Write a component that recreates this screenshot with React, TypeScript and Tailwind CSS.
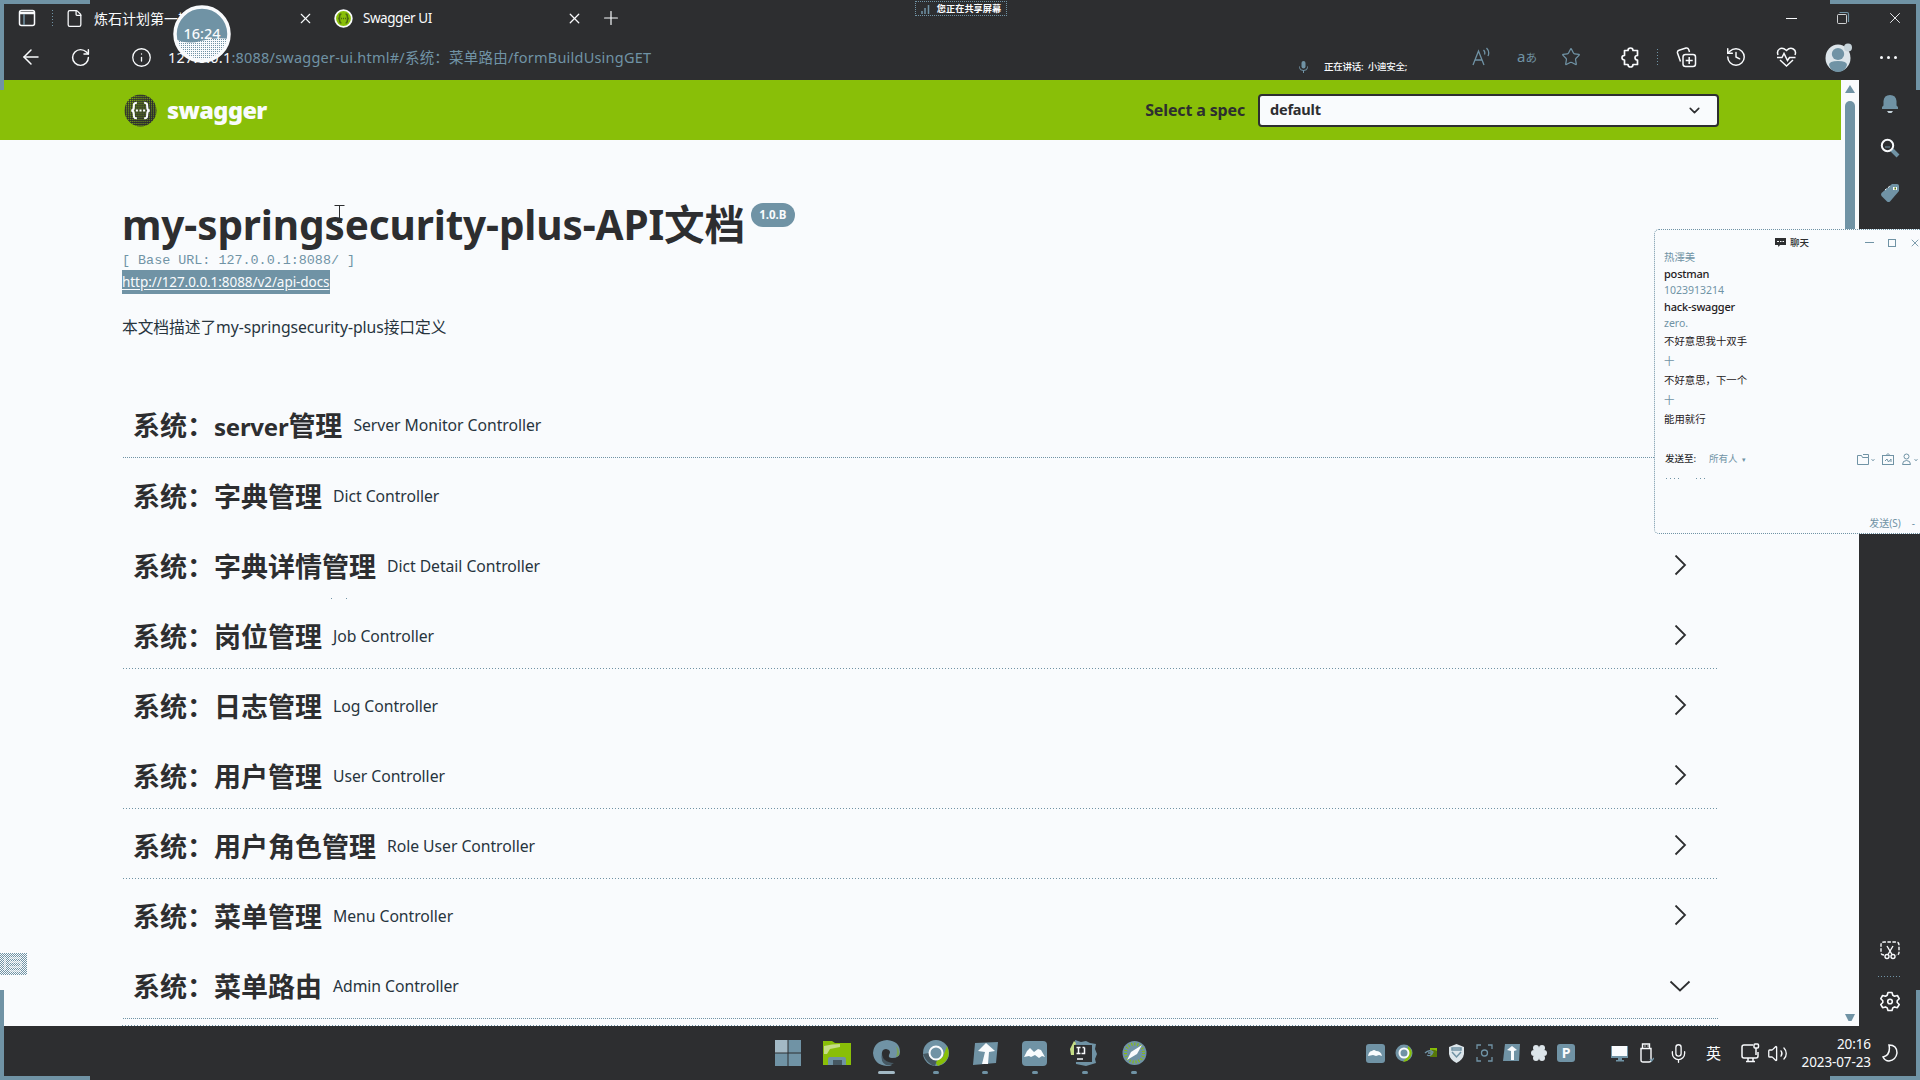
import React from "react";
import {
  ArrowLeft, File, Plus, X, RotateCw, Info, Star, History, Mic, Volume2, ChevronDown,
} from "lucide-react";

const DOTS = "bg-[repeating-linear-gradient(90deg,#7093a5_0_1px,transparent_1px_2px)]";
const SPARSE = "bg-[repeating-linear-gradient(90deg,#7093a5_0_1px,transparent_1px_3px)]";

type Group = { prefix: string; latin?: string; name: string; desc: string; line: "dense" | "sparse" | "none" | "few"; open?: boolean };

const groups: Group[] = [
  { prefix: "系统：", latin: "server", name: "管理", desc: "Server Monitor Controller", line: "dense" },
  { prefix: "系统：", name: "字典管理", desc: "Dict Controller", line: "none" },
  { prefix: "系统：", name: "字典详情管理", desc: "Dict Detail Controller", line: "few" },
  { prefix: "系统：", name: "岗位管理", desc: "Job Controller", line: "sparse" },
  { prefix: "系统：", name: "日志管理", desc: "Log Controller", line: "none" },
  { prefix: "系统：", name: "用户管理", desc: "User Controller", line: "sparse" },
  { prefix: "系统：", name: "用户角色管理", desc: "Role User Controller", line: "sparse" },
  { prefix: "系统：", name: "菜单管理", desc: "Menu Controller", line: "none" },
  { prefix: "系统：", name: "菜单路由", desc: "Admin Controller", line: "dense", open: true },
];

function SwaggerMark({ size, ring }: { size: number; ring: boolean }) {
  return (
    <svg width={size} height={size} viewBox="0 0 32 32" className="shrink-0">
      <defs>
        <pattern id="mesh" width="2" height="2" patternUnits="userSpaceOnUse">
          <rect width="2" height="2" fill="#2d2e30" />
          <rect width="1" height="1" fill="#89bf08" />
        </pattern>
      </defs>
      <circle cx="16" cy="16" r={ring ? 14 : 15.5} fill={ring ? "#89bf08" : "url(#mesh)"} stroke={ring ? "#f9fbfd" : "none"} strokeWidth="3" />
      <g fill="none" stroke={ring ? "#4d6a12" : "#f9fbfd"} strokeWidth={ring ? 2.6 : 2}>
        <path d="M12.5 8.5c-3 0-3 1.500-3 4s-.5 3.500-2.500 3.500c2 0 2.500 1 2.500 3.500s0 4 3 4" />
        <path d="M19.500 8.500c3 0 3 1.500 3 4s.5 3.500 2.500 3.500c-2 0-2.500 1-2.500 3.500s0 4-3 4" />
        <path d="M11.500 16h2m1.500 0h2m1.500 0h2" />
      </g>
    </svg>
  );
}

function WindowBar() {
  return (
    <div className="flex h-[34px] items-center pt-0.5 pl-[18px] pr-[16px] text-[#f9fbfd]">
      <svg width="18" height="18" viewBox="0 0 18 18" fill="none" stroke="currentColor" strokeWidth="1.5">
        <rect x="1.500" y="1.500" width="15" height="15" rx="2" />
        <path d="M1.500 4h15" strokeWidth="2.500" />
        <path d="M6 5v11" stroke="#7093a5" />
      </svg>
      <div className="ml-4 h-4 w-px bg-[repeating-linear-gradient(180deg,#7093a5_0_1px,transparent_1px_3px)]" />
      <File className="ml-3" size={19} strokeWidth={1.600} />
      <div className="ml-[10px] w-[191px] whitespace-nowrap text-[14px]">炼石计划第一期</div>
      <X className="ml-3" size={17} strokeWidth={1.600} />
      <div className="ml-5 flex"><SwaggerMark size={19} ring /></div>
      <div className="ml-[10px] w-[191px] text-[13.500px] tracking-[-0.45px]">Swagger UI</div>
      <X className="ml-3" size={17} strokeWidth={1.800} />
      <Plus className="ml-[17px]" size={22} strokeWidth={1.300} />
      <div className="ml-auto flex items-center">
        <div className="h-px w-[11px] bg-[#f9fbfd]" />
        <svg className="ml-[39px] text-[#7093a5]" width="14" height="14" viewBox="0 0 14 14" fill="none" stroke="currentColor">
          <rect x="1.500" y="3.500" width="9" height="9" rx="1" stroke="#f9fbfd" strokeWidth="0.800" />
          <path d="M3.500 1.500h7.500q1.500 0 1.500 1.500v8" strokeWidth="1.200" />
        </svg>
        <X className="ml-[36px]" size={18} strokeWidth={1.200} />
      </div>
    </div>
  );
}

function AddressBar() {
  return (
    <div className="flex h-[46px] items-center pl-[19px] pr-[23px] text-[#f9fbfd]">
      <ArrowLeft size={24} strokeWidth={1.500} />
      <RotateCw className="ml-[27px]" size={21} strokeWidth={1.700} />
      <Info className="ml-[40px]" size={21} strokeWidth={1.500} />
      <div className="ml-4 pt-px whitespace-nowrap text-[14.500px] tracking-[0.22px] text-[#7093a5]">
        <span className="text-[#f9fbfd]">127.0.0.1</span>:8088/swagger-ui.html#/系统：菜单路由/formBuildUsingGET
      </div>
      <div className="ml-auto mt-[20px] flex w-[173px] items-center whitespace-nowrap font-medium">
        <svg width="9" height="12" viewBox="0 0 9 12" fill="#7093a5">
          <rect x="2.500" width="4" height="7.500" rx="2" />
          <path d="M.5 5.500v1q0 3 4 3t4-3v-1M4.500 9v3" fill="none" stroke="#7093a5" />
        </svg>
        <span className="ml-4 text-[9.500px] tracking-[-0.25px]">正在讲话: &nbsp;小迪安全;</span>
      </div>
      <svg width="18" height="20" viewBox="0 0 18 20" fill="none" stroke="#7093a5" strokeWidth="1.300">
        <path d="M1 18 6.500 4 12 18M3 13h7M11.500 3q2 2 1 4.500M14.500 1q3.500 3.500 1.500 8" />
      </svg>
      <div className="ml-[27px] w-5 whitespace-nowrap text-[15px] leading-5 text-[#7093a5]">a<span className="text-[11.500px]">あ</span></div>
      <Star className="ml-[24px] text-[#7093a5]" size={20} strokeWidth={1.500} />
      <svg className="ml-[39px]" width="21" height="21" viewBox="0 0 21 21" fill="none" stroke="currentColor" strokeWidth="1.700" strokeLinejoin="round">
        <path d="M4.500 3.500H8Q8 1 10.500 1T13 3.500h4.500v5q-2.500 0-2.500 2.200t2.500 2.300V17.500H13q0 2.500-2.500 2.500T8 17.500H4.500V13Q2 13 2 10.700T4.500 8.500z" />
      </svg>
      <div className="ml-4 h-4 w-px bg-[repeating-linear-gradient(180deg,#7093a5_0_1px,transparent_1px_3px)]" />
      <svg className="ml-[18px]" width="21" height="21" viewBox="0 0 21 21" fill="none" stroke="currentColor" strokeWidth="1.500">
        <rect x="7" y="7.500" width="12.500" height="12" rx="2.500" />
        <path d="M13.200 10v7M9.700 13.500h7M4.500 14.500 1.500 6q-.5-2 1.500-2.700L10 1q2-.5 2.700 1.500l.8 2.500" />
      </svg>
      <History className="ml-[28px]" size={22} strokeWidth={1.600} />
      <svg className="ml-[29px]" width="21" height="20" viewBox="0 0 21 20" fill="none" stroke="currentColor" strokeWidth="1.500">
        <path d="M2 8Q.5 4 3.500 2t7 1.500Q14 0 17.300 2T19 8" />
        <path d="M1 10.500h5l2-4 3.500 7 2-3h6M4 13l6.500 6 6.500-6" />
      </svg>
      <svg className="ml-[28px]" width="28" height="32" viewBox="0 0 28 32">
        <ellipse cx="13" cy="17" rx="12.500" ry="13.500" fill="#dce5ea" />
        <circle cx="23" cy="6.500" r="4" fill="#c6d3da" />
        <ellipse cx="13" cy="13" rx="6.200" ry="6" fill="#7093a5" />
        <path d="M4 24q0-4 9-4t9 4q-2 7-9 7t-9-7" fill="#7093a5" />
      </svg>
      <div className="ml-[27px] flex gap-[4px]">
        <i className="size-[3px] rounded-full bg-[#f9fbfd]" /><i className="size-[3px] rounded-full bg-[#f9fbfd]" /><i className="size-[3px] rounded-full bg-[#f9fbfd]" />
      </div>
    </div>
  );
}

function GroupRow({ g }: { g: Group }) {
  return (
    <div className="flex h-[70px] flex-col first:mb-px">
      <div className="flex h-[69px] items-center pl-[11px] pr-[27px] pt-[6px]">
        <h4 className="flex items-baseline text-[27px] leading-none font-bold whitespace-nowrap">
          {g.prefix}
          {g.latin && <span className="text-[24px] tracking-[-0.25px]">{g.latin}</span>}
          {g.name}
        </h4>
        <span className="ml-[11px] text-[15.750px] tracking-[-0.05px] text-[#27343d]">{g.desc}</span>
        <span className="ml-auto">
          {g.open ? (
            <svg width="24" height="20" viewBox="0 0 24 20" fill="none" stroke="#2d2e30" strokeWidth="1.800"><path d="m2.500 4.500 9.500 9 9.500-9" /></svg>
          ) : (
            <svg width="24" height="24" viewBox="0 0 24 24" fill="none" stroke="#2d2e30" strokeWidth="1.800"><path d="m7.500 .5 9.500 9.500-9.500 9.500" /></svg>
          )}
        </span>
      </div>
      {g.line === "dense" && <div className={`ml-px h-px ${DOTS}`} />}
      {g.line === "sparse" && <div className={`ml-px h-px ${SPARSE}`} />}
      {g.line === "few" && <div className="ml-[209px] flex gap-[14px]"><i className="size-px bg-[#7093a5]" /><i className="size-px bg-[#7093a5]" /></div>}
    </div>
  );
}

function Page() {
  return (
    <div className="flex w-[1841px] flex-col overflow-hidden">
      <header className="flex h-[60px] shrink-0 items-center bg-[#89bf08] pl-[124px] pr-[122px]">
        <div className="flex"><SwaggerMark size={33} ring={false} /></div>
        <span className="ml-[10px] pt-0.5 text-[23.500px] leading-none font-black tracking-[-0.6px] text-[#f9fbfd]">swagger</span>
        <span className="ml-auto text-[16px] font-bold tracking-[-0.15px]">Select a spec</span>
        <div className="ml-[13px] flex h-[33px] w-[461px] items-center justify-between rounded-[4px] border-2 border-[#2d2e30] bg-[#f9fbfd] pl-[10px] pr-[14px] text-[14.500px] font-bold tracking-[-0.2px]">
          <span>default</span>
          <ChevronDown size={17} strokeWidth={2.300} />
        </div>
      </header>
      <main className="flex flex-col pl-[122px] pr-[122px]">
        <div className="mt-[59px] flex h-[52px] items-center whitespace-nowrap">
          <h1 className="text-[40.500px] leading-none font-bold tracking-[-0.13px]">my-springsecurity-plus-API文档</h1>
          <span className="mb-[20px] ml-[6px] flex h-6 w-11 items-center justify-center rounded-full bg-[#7093a5] text-[11.500px] font-bold text-[#f9fbfd]">1.0.B</span>
        </div>
        <div className="h-[18px] whitespace-pre pt-px font-['Liberation_Mono'] text-[13.400px] leading-[18px] text-[#7093a5]">[ Base URL: 127.0.0.1:8088/ ]</div>
        <div className="flex h-6 pt-px">
          <a className="flex h-[24px] items-center bg-[#7093a5] pt-px text-[13.500px] tracking-[-0.06px] text-[#f9fbfd] underline underline-offset-2">http://127.0.0.1:8088/v2/api-docs</a>
        </div>
        <p className="mt-[22px] h-6 text-[15.750px] leading-6 tracking-[-0.07px] text-[#27343d]">本文档描述了my-springsecurity-plus接口定义</p>
        <section className="mt-[49px]">
          {groups.map((g) => <GroupRow key={g.desc} g={g} />)}
          <div className={`mt-[6px] h-px ${SPARSE}`} />
        </section>
      </main>
    </div>
  );
}

function SideRail() {
  return (
    <aside className="flex w-[61px] flex-col items-center bg-[#2d2e30] text-[#f9fbfd]">
      <svg className="mt-[14px]" width="18" height="20" viewBox="0 0 18 20" fill="#7093a5">
        <path d="M1 15V13l1.500-1.500V7Q3 1 9 1t6.500 6v4.500L17 13v2z" /><path d="M6 17h6l-1.500 2h-3z" fill="#c6d3da" />
      </svg>
      <svg className="mt-[24px]" width="20" height="20" viewBox="0 0 20 20" fill="none">
        <path d="m12 12 6 6" stroke="#7093a5" strokeWidth="4" />
        <circle cx="7.500" cy="7.500" r="5.700" stroke="#f9fbfd" strokeWidth="2" />
        <path d="M5 9h5" stroke="#7093a5" />
      </svg>
      <svg className="mt-[25px]" width="20" height="20" viewBox="0 0 20 20">
        <path d="M12 1h5q2 0 2 2v5L10 18.500q-1.500 1-3 0L1.500 13q-1-1.500 0-3z" fill="#7093a5" />
        <path d="m5 7 5-4" stroke="#f9fbfd" strokeDasharray="2 2" /><rect x="13" y="4" width="4" height="3" fill="#f9fbfd" /><rect x="14.500" y="4.500" width="1.500" height="2" fill="#577908" />
      </svg>
      <svg className="mt-auto" width="20" height="19" viewBox="0 0 20 19" fill="none" stroke="currentColor" strokeWidth="1.400">
        <path d="M4 14q-3 0-3-2.500V4q0-3 3-3h12q3 0 3 3v7.500q0 2.500-3 2.500" strokeDasharray="3.500 1.500" />
        <path d="m7 5 5 8.500M13 5l-5 8.500" /><circle cx="7" cy="15.500" r="2" /><circle cx="13" cy="15.500" r="2" />
      </svg>
      <div className="mt-4 h-px w-6 bg-[repeating-linear-gradient(90deg,#7093a5_0_1px,transparent_1px_3px)]" />
      <svg className="mt-[14px] mb-[14px]" width="20" height="21" viewBox="0 0 20 21" fill="none" stroke="currentColor" strokeWidth="1.600" strokeLinejoin="round">
        <path d="M8 1.500h4l.8 2.800 1.700 1 2.900-.8 1.800 3.200-2 2v1.800l2 2-1.800 3.200-2.900-.8-1.700 1-.8 2.600H8l-.8-2.600-1.700-1-2.900.8L.8 13.500l2-2V9.700l-2-2 1.800-3.200 2.900.8 1.700-1z" />
        <circle cx="10" cy="10.500" r="2.300" />
      </svg>
    </aside>
  );
}

const messages: { t: string; c: string }[] = [
  { t: "热澤美", c: "h-[13px] text-[10.400px] text-[#7093a5]" },
  { t: "postman", c: "h-[19px] text-[11px] tracking-[-0.2px] font-medium" },
  { t: "1023913214", c: "h-[15px] text-[10.500px] text-[#7093a5]" },
  { t: "hack-swagger", c: "h-[17px] text-[11px] tracking-[-0.2px] font-medium" },
  { t: "zero.", c: "h-[17px] text-[10.500px] text-[#7093a5]" },
  { t: "不好意思我十双手", c: "h-[19px] text-[10.400px]" },
  { t: "十", c: "h-[20px] text-[10.400px] text-[#7093a5]" },
  { t: "不好意思，下一个", c: "h-[19px] text-[10.400px]" },
  { t: "十", c: "h-[20px] text-[10.400px] text-[#7093a5]" },
  { t: "能用就行", c: "h-[19px] text-[10.400px]" },
];

function ChatWindow() {
  return (
    <div className="absolute top-[229px] left-[1654px] flex h-[305px] w-[266px] flex-col rounded-l-[5px] border border-r-0 border-dotted border-[#7093a5] bg-[#f9fbfd]">
      <div className="flex h-[21px] shrink-0 items-center pt-[4px] pl-[120px]">
        <svg width="11" height="9" viewBox="0 0 11 9" fill="#2d2e30"><path d="M0 0h11v7H5L3.500 9 3 7H0z" /><path d="M2 3.500h2m1 0h1.500m1 0H9" stroke="#f9fbfd" /></svg>
        <span className="ml-[4px] text-[9.500px] leading-none font-medium">聊天</span>
        <i className="ml-auto h-px w-[9px] bg-[#7093a5]" />
        <i className="ml-[14px] size-[8px] border border-[#7093a5]" />
        <X className="mr-[-1px] ml-[13px] text-[#7093a5]" size={12} strokeWidth={1.800} />
      </div>
      <div className="flex flex-col pl-[9px] text-[#1f2022]">
        {messages.map((m, i) => <div key={i} className={`flex items-center leading-none whitespace-nowrap ${m.c}`}>{m.t}</div>)}
      </div>
      <div className="mt-[21px] flex h-[18px] items-center pl-[10px] text-[9.500px] leading-none whitespace-nowrap text-[#7093a5]">
        <span className="font-medium text-[#2d2e30]">发送至:</span>
        <span className="ml-[13px]">所有人</span><span className="ml-1 text-[7px]">▾</span>
        <svg className="ml-auto" width="64" height="13" viewBox="0 0 64 13" fill="none" stroke="#7093a5">
          <path d="M1.500 2.500h4l1 2h6v7h-11zM7 1.500h5.500v3M15.500 6.500l1.500 1 1.500-1" />
          <rect x="26.500" y="2.500" width="11" height="9" /><path d="M30 2.500 32 .5l2 2M29 8l2-2 1.500 3 2.500-3v3" />
          <circle cx="50.500" cy="3.500" r="2.500" /><path d="M46.500 11.500q0-4 4-4t4 4zM58.500 6.500l1.500 1 1.500-1" />
        </svg>
      </div>
      <div className="mt-[10px] ml-[11px] flex gap-4">
        <div className="h-px w-[14px] bg-[repeating-linear-gradient(90deg,#7093a5_0_1px,transparent_1px_4px)]" />
        <div className="h-px w-[10px] bg-[repeating-linear-gradient(90deg,#7093a5_0_1px,transparent_1px_4px)]" />
      </div>
      <div className="mt-auto flex h-[20px] items-center justify-end pr-[5px] text-[10px] leading-none text-[#7093a5]">
        <span>发送(S)</span><span className="ml-[11px]">-</span>
      </div>
    </div>
  );
}

function TaskIcons() {
  return (
    <div className="flex gap-[23.400px]">
      <svg width="26" height="26" viewBox="0 0 26 26" fill="#7093a5"><rect width="12.500" height="12.500" fill="#a3b9c5" /><path d="M13.500 0H26v12.500H13.500zM0 13.500h12.500V26H0zM13.500 13.500H26V26H13.500z" /></svg>
      <svg width="28" height="26" viewBox="0 0 28 26" className="-mx-px"><path d="M0 1h9l3 2h16v22H0z" fill="#89bf08" /><path d="M1 6q8-2 16-2v3L7 9 4 14H1z" fill="#c5dd86" /><path d="M5 25v-6q0-2 2-2h14q2 0 2 2v6z" fill="#7093a5" /><path d="M10 20h9v5h-9z" fill="#465862" /></svg>
      <svg width="28" height="26" viewBox="0 0 28 26" className="-mx-px"><path d="M14 0Q27 1 27 12q0 6-8 6-4 0-3-3 3-5-3-6-5 0-4 7 1 7 10 9-2 1-5 1Q1 25 0 13 1 1 14 0" fill="#7093a5" /><path d="M9 13q0 9 12 10-4 3-8 2-6-3-4-12" fill="#465862" /><path d="M23 6q4 4 3 9l-3 2q2-5 0-11" fill="#7ba356" /></svg>
      <svg width="26" height="26" viewBox="0 0 26 26"><circle cx="13" cy="13" r="13" fill="#7093a5" /><path d="M24 6q6 14-9 20l-3-4 8-5z" fill="#89bf08" /><path d="M0 14q4 10 12 12l2-6q-5 0-8-7z" fill="#465862" /><circle cx="13" cy="13" r="6.500" fill="#7093a5" stroke="#f9fbfd" strokeWidth="2" /></svg>
      <svg width="26" height="24" viewBox="0 0 26 24" className="mt-0.5"><path d="M2 1 25 0l-2 21-23 2z" fill="#7093a5" /><path d="M13 1 22 9l-6 1-1 12h-6l3-12-7-1z" fill="#f9fbfd" /></svg>
      <svg width="25" height="25" viewBox="0 0 25 25" className="mt-px"><rect width="25" height="25" rx="4" fill="#7093a5" /><path d="m2 16 3-6 3-3 4 4 4-3 3 1 4 7-3-1-3 2-4-3-4 2-2-1z" fill="#f9fbfd" /></svg>
      <svg width="28" height="26" viewBox="0 0 28 26"><path d="m5 0 6 2 5-1 4 2 6 1-1 5 2 5-2 5 1 4-10 3-10-2z" fill="#7093a5" /><path d="M1 15 0 9 4 1l2 2-2 7v5z" fill="#c5dd86" /><rect x="4" y="5" width="18" height="17" fill="#2d2e30" /><path d="M6.500 7.500h4m-2 0v6m-2 0h4M14.500 7.500h-2m2 0v6h-3M7 19h6" stroke="#f9fbfd" strokeWidth="1.500" fill="none" /></svg>
      <svg width="25" height="25" viewBox="0 0 25 25"><circle cx="12.500" cy="13" r="12" fill="#7093a5" /><circle cx="12.500" cy="13" r="9" fill="none" stroke="#89bf08" strokeWidth="3" strokeDasharray="1 2" /><path d="M5 20 9 12 20 5l-5 9z" fill="#f9fbfd" /></svg>
    </div>
  );
}

function Tray() {
  return (
    <div className="flex items-center">
      <svg width="19" height="19" viewBox="0 0 19 19"><rect width="19" height="19" rx="3" fill="#7093a5" /><path d="M2 12q1-5 4-5 2-2 4 0 5 0 6 5l-3-1-3 1-3-1z" fill="#f9fbfd" /></svg>
      <svg className="ml-[10px]" width="18" height="18" viewBox="0 0 18 18"><circle cx="9" cy="9" r="8.500" fill="#7093a5" /><path d="M13 2q8 7-1 15l-4 1 4-5z" fill="#89bf08" /><circle cx="9" cy="9" r="4.500" fill="#7093a5" stroke="#f9fbfd" strokeWidth="2" /></svg>
      <svg className="ml-[11px]" width="13" height="10" viewBox="0 0 13 10"><path d="M6 0h7v9H6z" fill="#577908" /><path d="M6 0h7v3q-3-2-7-1z" fill="#89bf08" /><path d="M1 5q4-4 8-1Q7 9 3 7M4 5h4" fill="none" stroke="#7093a5" strokeWidth="1.300" /></svg>
      <svg className="ml-[12px]" width="15" height="19" viewBox="0 0 15 19"><path d="M7.500 0 15 3v7q-1 6-7.500 9Q1 16 0 10V3z" fill="#dce5ea" /><path d="M3 4h9v2H3zM3 8l4.500 5L12 8" fill="none" stroke="#7093a5" strokeWidth="1.500" /></svg>
      <svg className="ml-[12px]" width="17" height="18" viewBox="0 0 17 18" fill="none" stroke="#7093a5" strokeWidth="1.300"><path d="M1 5V1h4M12 1h4v4M16 13v4h-4M5 17H1v-4" /><circle cx="8.500" cy="9" r="3" /></svg>
      <svg className="ml-[10px]" width="17" height="18" viewBox="0 0 17 18"><path d="M2 0h15l-1 17H0z" fill="#7093a5" /><path d="m9 2 5 4-3 1v9H8V7L4 6z" fill="#f9fbfd" /></svg>
      <svg className="ml-[11px]" width="16" height="18" viewBox="0 0 16 18" fill="#dce5ea"><circle cx="8" cy="9" r="5" /><circle cx="5" cy="4" r="3" /><circle cx="11" cy="4" r="3" /><circle cx="3" cy="9" r="3" /><circle cx="13" cy="9" r="3" /><circle cx="5" cy="14" r="3" /><circle cx="11" cy="14" r="3" /></svg>
      <div className="ml-[10px] flex size-[18px] items-center justify-center rounded-[3px] bg-[#7093a5] text-[14px] leading-none font-bold text-[#f9fbfd]">P</div>
      <svg className="ml-[36px]" width="17" height="17" viewBox="0 0 17 17" fill="#f9fbfd"><path d="M0 1h17v12H0z" fill="#7093a5" /><path d="M1 1h15v10H1z" /><path d="M7 13h4v2H7zM5 15h8v1.500H5z" fill="#7093a5" /></svg>
      <svg className="ml-[12px]" width="14" height="20" viewBox="0 0 14 20" fill="none" stroke="#f9fbfd" strokeWidth="1.400"><path d="M2.500 5.500V1h7v4.500M1 5.500h10V17q0 2-2 2H3q-2 0-2-2zM4.500 3h1M7.500 3h1" /><path d="m10 16 1.500 2 2.500-3" stroke="#7093a5" /></svg>
      <Mic className="ml-[14px]" size={21} strokeWidth={1.500} />
      <span className="ml-[17px] text-[15px] leading-none">英</span>
      <svg className="ml-[20px]" width="19" height="20" viewBox="0 0 19 20" fill="none" stroke="#f9fbfd" strokeWidth="1.500"><path d="M12 2H3q-2 0-2 2v9q0 2 2 2h12q2 0 2-2V9M5 18.500h9M7 15v3M12 15v3" /><rect x="13" y="1" width="4.500" height="4" rx="1" /><path d="M15 5v7" /></svg>
      <Volume2 className="ml-[7px]" size={21} strokeWidth={1.500} />
      <div className="ml-[11px] w-[72px] text-right text-[13.500px] leading-[18px] tracking-[-0.1px] whitespace-nowrap"><div>20:16</div><div>2023-07-23</div></div>
      <svg className="ml-[11px]" width="16" height="18" viewBox="0 0 16 18" fill="none" stroke="#f9fbfd" strokeWidth="1.500"><path d="M7 1q8 0 8 8-1 7-8 8-4 0-6-4 8-2 6-12z" /></svg>
    </div>
  );
}

export default function App() {
  return (
    <div className="relative flex h-[1080px] w-[1920px] flex-col overflow-hidden bg-[#f9fbfd] font-['Noto_Sans','Noto_Sans_CJK_SC',sans-serif] text-[#2d2e30]">
      <div className="h-20 shrink-0 bg-[#2d2e30]">
        <WindowBar />
        <AddressBar />
      </div>
      <div className="flex h-[946px] shrink-0">
        <Page />
        <div className="flex w-[18px] flex-col items-center">
          <svg className="mt-[5px]" width="10" height="8" viewBox="0 0 10 8" fill="#7093a5"><path d="M5 0 10 8H0z" /></svg>
          <div className="mt-[8px] h-[137px] w-[10px] rounded-t-full bg-[#7093a5]" />
          <svg className="mt-auto mb-[5px]" width="10" height="7" viewBox="0 0 10 7" fill="#7093a5"><path d="M0 0h10L6.500 7h-3z" /></svg>
        </div>
        <SideRail />
      </div>
      <footer className="flex h-[54px] shrink-0 items-center justify-between bg-[#2d2e30] pl-[775px] pr-[22px] text-[#f9fbfd]">
        <div className="flex flex-col pt-[8px]">
          <TaskIcons />
          <div className="mt-[5px] flex items-center pl-[103px]">
            <i className="h-[3px] w-[17px] rounded-full bg-[#a3b9c5]" />
            <i className="ml-[38px] h-[3px] w-[6px] rounded-full bg-[#7093a5]" />
            <i className="ml-[43px] h-[3px] w-[6px] rounded-full bg-[#7093a5]" />
            <i className="ml-[44px] h-[3px] w-[6px] rounded-full bg-[#7093a5]" />
            <i className="ml-[44px] h-[3px] w-[6px] rounded-full bg-[#7093a5]" />
            <i className="ml-[43px] h-[3px] w-[6px] rounded-full bg-[#7093a5]" />
          </div>
        </div>
        <Tray />
      </footer>

      <div className="absolute top-px left-[915px] flex h-[15px] w-[92px] items-center justify-center border border-dotted border-[#7093a5] text-[#f9fbfd]">
        <svg width="9" height="10" viewBox="0 0 9 10" stroke="#7093a5" strokeWidth="1.500"><path d="M1 10V7M4 10V4M7.500 10V1" /></svg>
        <span className="ml-[7px] text-[9.200px] leading-none font-bold whitespace-nowrap">您正在共享屏幕</span>
      </div>
      <svg className="absolute top-[5px] left-[173px]" width="58" height="58" viewBox="0 0 58 58">
        <defs><pattern id="grain" width="2" height="2" patternUnits="userSpaceOnUse"><rect width="2" height="2" fill="#f9fbfd" /><rect width="1" height="1" fill="#7093a5" /></pattern></defs>
        <circle cx="29" cy="29" r="27" fill="#7093a5" />
        <path d="M2 34Q14 40 28 36T56 34Q52 56 29 56T2 34" fill="url(#grain)" />
        <circle cx="29" cy="29" r="27" fill="none" stroke="#f9fbfd" strokeWidth="3.500" />
        <text x="29" y="34" textAnchor="middle" fontSize="14.500" fontWeight="500" fill="#f9fbfd">16:24</text>
      </svg>
      <svg className="absolute top-[204px] left-[334px]" width="11" height="20" viewBox="0 0 11 20" fill="none" stroke="#2d2e30"><path d="M.5 1.500h10M5.500 1.500v17M3 18.500h5" /></svg>
      <svg className="absolute top-[953px] left-0" width="27" height="22" viewBox="0 0 27 22">
        <defs><pattern id="haze" width="2" height="2" patternUnits="userSpaceOnUse"><rect width="1" height="1" fill="#7093a5" /><rect x="1" y="1" width="1" height="1" fill="#7093a5" /></pattern></defs>
        <rect width="27" height="22" fill="url(#haze)" /><path d="M5 4v13M9 5h12M9 9h12v5H9M9 18h12" stroke="#f9fbfd" strokeWidth="1" fill="none" />
      </svg>
      <ChatWindow />
      <div className="absolute top-0 left-0 h-[90px] w-[90px] border-t-4 border-l-4 border-[#7093a5]" />
      <div className="absolute top-0 right-0 h-[90px] w-[90px] border-t-4 border-r-4 border-[#7093a5]" />
      <div className="absolute bottom-0 left-0 h-[90px] w-[90px] border-b-4 border-l-4 border-[#7093a5]" />
      <div className="absolute right-0 bottom-0 h-[90px] w-[90px] border-r-4 border-b-4 border-[#7093a5]" />
    </div>
  );
}
